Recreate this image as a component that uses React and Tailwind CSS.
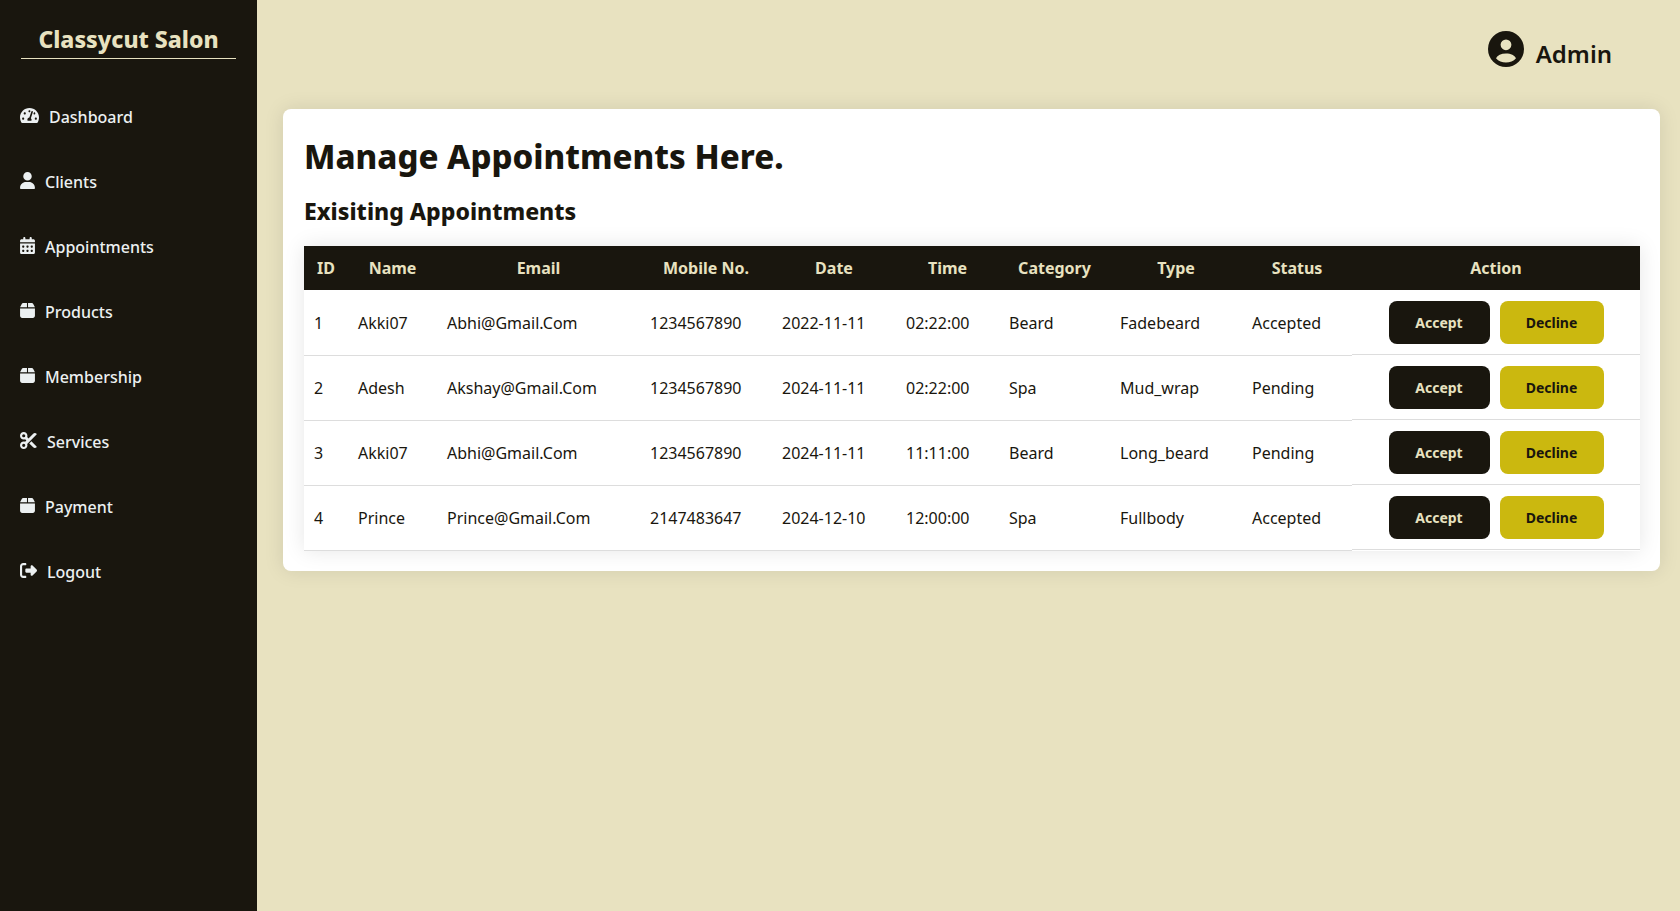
import { FaTachometerAlt } from "react-icons/fa";
import { FaUser, FaCalendarDays, FaBox, FaScissors, FaRightFromBracket } from "react-icons/fa6";

const navItems = [
  { label: "Dashboard", Icon: FaTachometerAlt, width: "w-[19px]" },
  { label: "Clients", Icon: FaUser, width: "w-[15px]" },
  { label: "Appointments", Icon: FaCalendarDays, width: "w-[15px]" },
  { label: "Products", Icon: FaBox, width: "w-[15px]" },
  { label: "Membership", Icon: FaBox, width: "w-[15px]" },
  { label: "Services", Icon: FaScissors, width: "w-[17px]" },
  { label: "Payment", Icon: FaBox, width: "w-[15px]" },
  { label: "Logout", Icon: FaRightFromBracket, width: "w-[17px]" },
];

const columns = [
  { label: "ID", width: "w-[44px]" },
  { label: "Name", width: "w-[89px]" },
  { label: "Email", width: "w-[203px]" },
  { label: "Mobile No.", width: "w-[132px]" },
  { label: "Date", width: "w-[124px]" },
  { label: "Time", width: "w-[103px]" },
  { label: "Category", width: "w-[111px]" },
  { label: "Type", width: "w-[132px]" },
  { label: "Status", width: "w-[110px]" },
  { label: "Action", width: "w-[288px]" },
];

const appointments = [
  ["1", "Akki07", "Abhi@Gmail.Com", "1234567890", "2022-11-11", "02:22:00", "Beard", "Fadebeard", "Accepted"],
  ["2", "Adesh", "Akshay@Gmail.Com", "1234567890", "2024-11-11", "02:22:00", "Spa", "Mud_wrap", "Pending"],
  ["3", "Akki07", "Abhi@Gmail.Com", "1234567890", "2024-11-11", "11:11:00", "Beard", "Long_beard", "Pending"],
  ["4", "Prince", "Prince@Gmail.Com", "2147483647", "2024-12-10", "12:00:00", "Spa", "Fullbody", "Accepted"],
];

function UserCircle({ className }) {
  return (
    <svg viewBox="0 0 36 36" fill="currentColor" fillRule="evenodd" className={className} aria-hidden="true">
      <path d="M18 0a18 18 0 1 0 0 36a18 18 0 1 0 0-36ZM18 8.4a5.4 5.4 0 1 1 0 10.8a5.4 5.4 0 1 1 0-10.8ZM8 27.3C9.5 24.4 13 22.6 18 22.6S26.5 24.4 28 27.3C25.5 30.2 22 31.5 18 31.5S10.5 30.2 8 27.3Z" />
    </svg>
  );
}

function Sidebar() {
  return (
    <aside className="w-[257px] shrink-0 bg-[#19160e] px-[21px] pt-[25px]">
      <h2 className="border-b border-[#e8e2c0] pb-1 text-center text-[23px] leading-[29px] font-extrabold text-[#e8e2c0]">
        Classycut Salon
      </h2>
      <nav className="-mx-px mt-[25px]">
        <ul>
          {navItems.map(({ label, Icon, width }) => (
            <li key={label}>
              <a href="#" className="flex h-[65px] items-center gap-[10px] text-base font-medium text-[#ecf0f1]">
                <Icon className={`mb-[3px] h-[17px] ${width}`} aria-hidden="true" />
                {label}
              </a>
            </li>
          ))}
        </ul>
      </nav>
    </aside>
  );
}

function AppointmentsTable() {
  return (
    <table className="w-full table-fixed border-separate border-spacing-0 shadow-[0_0_20px_rgba(0,0,0,0.1)]">
      <thead>
        <tr>
          {columns.map(({ label, width }) => (
            <th
              key={label}
              scope="col"
              className={`${width} h-[45px] border-b border-white bg-[#19160e] text-center text-base font-bold text-[#e8e2c0]`}
            >
              {label}
            </th>
          ))}
        </tr>
      </thead>
      <tbody>
        {appointments.map((row) => (
          <tr key={row[0]}>
            {row.map((value, i) => (
              <td key={i} className="h-[65px] border-b border-[#dddddd] px-[10px] text-base">
                {value}
              </td>
            ))}
            <td className="p-0 align-top">
              <div className="flex h-16 items-center justify-center gap-[10px] border-b border-[#dddddd]">
                <button
                  type="button"
                  className="h-[43px] w-[101px] rounded-lg bg-[#19160e] text-sm font-bold text-[#e8e2c0]"
                >
                  Accept
                </button>
                <button
                  type="button"
                  className="h-[43px] w-[104px] rounded-lg bg-[#cbb80f] text-sm font-bold text-[#19160e]"
                >
                  Decline
                </button>
              </div>
            </td>
          </tr>
        ))}
      </tbody>
    </table>
  );
}

export default function App() {
  return (
    <div className="flex min-h-screen bg-[#e8e2c0] font-['Noto_Sans',sans-serif] text-[#19160e]">
      <Sidebar />
      <div className="min-w-0 flex-1 pr-5 pl-[26px]">
        <header className="flex h-[109px] items-start justify-end gap-3 pt-[31px] pr-12">
          <UserCircle className="size-9" />
          <span className="text-2xl leading-[46px] font-semibold">Admin</span>
        </header>
        <main className="rounded-lg bg-white pt-6 pr-5 pb-5 pl-[21px] shadow-[0_0_20px_rgba(0,0,0,0.1)]">
          <h1 className="text-[33px] leading-[48px] font-extrabold">Manage Appointments Here.</h1>
          <h2 className="mt-3 mb-[17px] text-[23px] leading-9 font-extrabold">Exisiting Appointments</h2>
          <AppointmentsTable />
        </main>
      </div>
    </div>
  );
}
